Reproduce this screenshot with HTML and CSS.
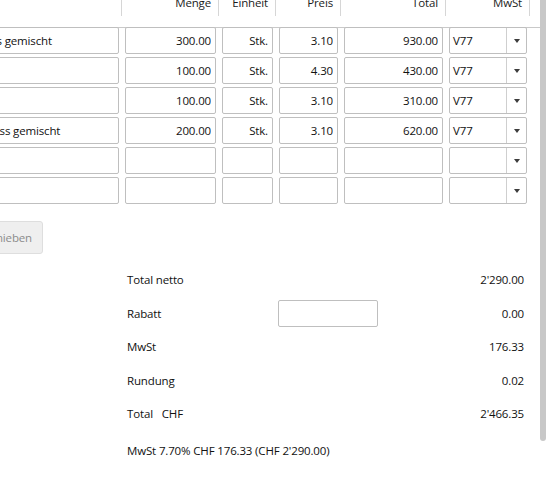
FILE: index.html
```html
<!DOCTYPE html>
<html lang="de">
<head>
    <meta charset="UTF-8">
    <meta name="viewport" content="width=device-width, initial-scale=1.0">
    <title>Rechnung</title>
    <link rel="stylesheet" href="styles.css">
</head>
<body>

    <div class="window">
        <main class="pane">

            <!-- Positionen -->
            <div class="sheet">
                <div class="head">
                    <div class="hcell left">Bezeichnung</div>
                    <div class="hcell">Menge</div>
                    <div class="hcell">Einheit</div>
                    <div class="hcell">Preis</div>
                    <div class="hcell">Total</div>
                    <div class="hcell">MwSt</div>
                    <div class="hcell blank"></div>
                </div>

                <div class="rows">
                    <div class="cell"><input class="field" type="text" value="Hafer und Reis gemischt"></div>
                    <div class="cell"><input class="field num" type="text" value="300.00"></div>
                    <div class="cell"><input class="field num" type="text" value="Stk."></div>
                    <div class="cell"><input class="field num" type="text" value="3.10"></div>
                    <div class="cell"><input class="field num" type="text" value="930.00"></div>
                    <div class="cell"><div class="combo"><span class="combo-val">V77</span><span class="combo-btn"><i class="arrow"></i></span></div></div>
                    <div class="cell"></div>

                    <div class="cell"><input class="field" type="text" value="Legemehl"></div>
                    <div class="cell"><input class="field num" type="text" value="100.00"></div>
                    <div class="cell"><input class="field num" type="text" value="Stk."></div>
                    <div class="cell"><input class="field num" type="text" value="4.30"></div>
                    <div class="cell"><input class="field num" type="text" value="430.00"></div>
                    <div class="cell"><div class="combo"><span class="combo-val">V77</span><span class="combo-btn"><i class="arrow"></i></span></div></div>
                    <div class="cell"></div>

                    <div class="cell"><input class="field" type="text" value="Kükenfutter"></div>
                    <div class="cell"><input class="field num" type="text" value="100.00"></div>
                    <div class="cell"><input class="field num" type="text" value="Stk."></div>
                    <div class="cell"><input class="field num" type="text" value="3.10"></div>
                    <div class="cell"><input class="field num" type="text" value="310.00"></div>
                    <div class="cell"><div class="combo"><span class="combo-val">V77</span><span class="combo-btn"><i class="arrow"></i></span></div></div>
                    <div class="cell"></div>

                    <div class="cell"><input class="field" type="text" value="Dinkel und Nuss gemischt"></div>
                    <div class="cell"><input class="field num" type="text" value="200.00"></div>
                    <div class="cell"><input class="field num" type="text" value="Stk."></div>
                    <div class="cell"><input class="field num" type="text" value="3.10"></div>
                    <div class="cell"><input class="field num" type="text" value="620.00"></div>
                    <div class="cell"><div class="combo"><span class="combo-val">V77</span><span class="combo-btn"><i class="arrow"></i></span></div></div>
                    <div class="cell"></div>

                    <div class="cell"><input class="field" type="text"></div>
                    <div class="cell"><input class="field num" type="text"></div>
                    <div class="cell"><input class="field num" type="text"></div>
                    <div class="cell"><input class="field num" type="text"></div>
                    <div class="cell"><input class="field num" type="text"></div>
                    <div class="cell"><div class="combo"><span class="combo-val"></span><span class="combo-btn"><i class="arrow"></i></span></div></div>
                    <div class="cell"></div>

                    <div class="cell"><input class="field" type="text"></div>
                    <div class="cell"><input class="field num" type="text"></div>
                    <div class="cell"><input class="field num" type="text"></div>
                    <div class="cell"><input class="field num" type="text"></div>
                    <div class="cell"><input class="field num" type="text"></div>
                    <div class="cell"><div class="combo"><span class="combo-val"></span><span class="combo-btn"><i class="arrow"></i></span></div></div>
                    <div class="cell"></div>
                </div>
            </div>

            <div class="actions">
                <button class="btn" disabled>Verschieben</button>
            </div>

            <!-- Totals -->
            <div class="summary">
                <div class="label">Total netto</div>
                <div></div>
                <div class="value">2'290.00</div>

                <div class="label">Rabatt</div>
                <div><input class="field rabatt" type="text"></div>
                <div class="value">0.00</div>

                <div class="label">MwSt</div>
                <div></div>
                <div class="value">176.33</div>

                <div class="label">Rundung</div>
                <div></div>
                <div class="value">0.02</div>

                <div class="label">Total <span class="currency">CHF</span></div>
                <div></div>
                <div class="value">2'466.35</div>
            </div>

            <p class="note">MwSt 7.70% CHF 176.33 (CHF 2'290.00)</p>
        </main>

        <div class="scroll"><div class="thumb"></div></div>
    </div>

</body>
</html>
```

FILE: styles.css
```css
body { margin: 0; font-family: "Segoe UI", "Open Sans", sans-serif; font-size: 11.5px; letter-spacing: -0.15px; color: #111; background: #fff; overflow: hidden; }
.window { display: flex; height: 485px; }
.pane { width: 540px; overflow: hidden; }

/* Positionen */
.sheet { margin-left: -83px; width: 623px; }
.head, .rows { display: grid; grid-template-columns: 205px 97px 57px 65px 105px 84px 10px; }
.head { margin-top: -8px; padding-bottom: 11px; border-bottom: 1px solid #c9c9c9; margin-bottom: -1px; }
.hcell { height: 24px; line-height: 22px; text-align: right; padding-right: 7px; border-right: 1px solid #d6d6d6; color: #1b1b1b; }
.hcell.left { text-align: left; padding-left: 8px; }
.hcell.blank { border-right: none; }
.rows { row-gap: 3px; }
.cell { padding: 0 3px; }

.field { display: block; width: 100%; height: 27px; box-sizing: border-box; margin: 0; padding: 0 4px; border: 1px solid #bfbfbf; border-radius: 2px; background: #fff; font: inherit; letter-spacing: inherit; color: #111; outline: none; }
.field.num { text-align: right; }

.combo { display: flex; height: 27px; box-sizing: border-box; border: 1px solid #bfbfbf; border-radius: 2px; }
.combo-val { flex: 1; line-height: 25px; padding-left: 3px; }
.combo-btn { width: 19px; border-left: 1px solid #cfcfcf; display: flex; align-items: center; justify-content: center; }
.arrow { width: 0; height: 0; border-left: 3.5px solid transparent; border-right: 3.5px solid transparent; border-top: 4px solid #3c3c3c; }

/* Buttons */
.actions { padding-top: 17px; }
.btn { display: block; width: 93px; height: 33px; margin-left: -50px; padding: 0 10px 0 0; text-align: right; font: inherit; letter-spacing: inherit; color: #8c8c8c; background: #efefef; border: 1px solid #dedede; border-radius: 3px; }

/* Totals */
.summary { display: grid; grid-template-columns: 151px 100px 146px; grid-auto-rows: 33.5px; align-items: center; margin: 9px 0 0 127px; }
.value { text-align: right; }
.currency { margin-left: 6px; }
.rabatt { width: 100px; }
.note { margin: 11px 0 0 127px; line-height: 17px; }

.scroll { width: 6px; }
.thumb { height: 441px; background: #c8c8c8; border-radius: 0 0 3px 3px; }
```
